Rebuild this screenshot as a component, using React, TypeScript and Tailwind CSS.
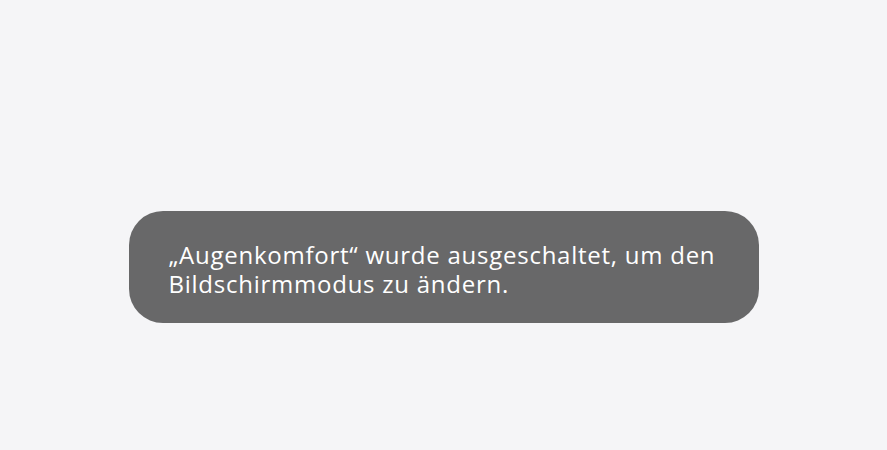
export default function App() {
  return (
    <div className="w-[887px] h-[450px] bg-[#f5f5f7] flex flex-col items-center">
      <div className="mt-[211px] w-[630px] h-[112px] rounded-[34px] bg-[#686869] flex flex-col justify-center pl-[40px] pr-[20px] pt-[4px]">
        <p
          className="text-white text-[24px] leading-[29px] tracking-[0.75px] whitespace-nowrap"
          style={{ fontFamily: '"Open Sans", sans-serif' }}
        >
          „Augenkomfort“ wurde ausgeschaltet, um den
          <br />
          Bildschirmmodus zu ändern.
        </p>
      </div>
    </div>
  );
}
